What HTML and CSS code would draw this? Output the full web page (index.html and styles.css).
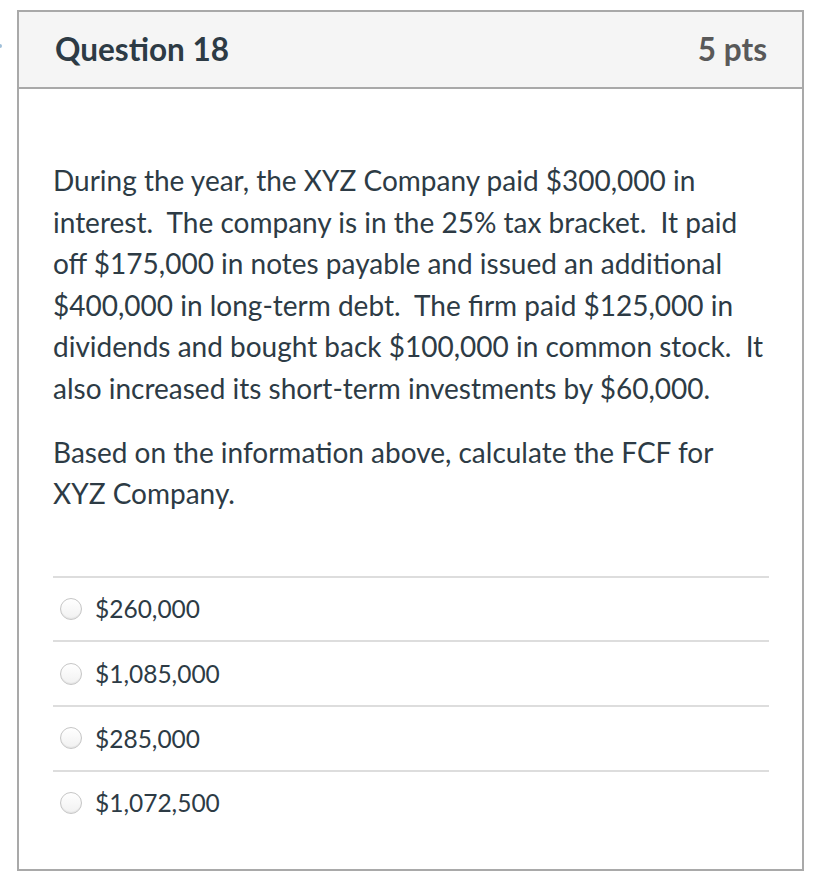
FILE: index.html
```html
<!DOCTYPE html>
<html>
<head>
<meta charset="utf-8">
<link rel="stylesheet" href="styles.css">
</head>
<body>
<span class="edge-dot"></span>
<div class="question">
  <div class="q-header">
    <h2 class="q-title">Question 18</h2>
    <span class="q-points">5 pts</span>
  </div>
  <div class="q-body">
    <div class="q-text">
      <p>During the year, the XYZ Company paid $300,000 in interest.&nbsp; The company is in the 25% tax bracket.&nbsp; It paid off $175,000 in notes payable and issued an additional $400,000 in long-term debt.&nbsp; The firm paid $125,000 in dividends and bought back $100,000 in common stock.&nbsp; It also increased its short-term investments by $60,000.</p>
      <p>Based on the information above, calculate the FCF for XYZ Company.</p>
    </div>
    <div class="answers">
      <label class="answer"><span class="radio"></span><span class="answer-text">$260,000</span></label>
      <label class="answer"><span class="radio"></span><span class="answer-text">$1,085,000</span></label>
      <label class="answer"><span class="radio"></span><span class="answer-text">$285,000</span></label>
      <label class="answer"><span class="radio"></span><span class="answer-text">$1,072,500</span></label>
    </div>
  </div>
</div>
</body>
</html>
```
FILE: styles.css
```css
html, body {
  margin: 0;
  padding: 0;
  background: #ffffff;
}

body {
  font-family: Lato, "Liberation Sans", sans-serif;
  color: #2d3b45;
  padding: 10px 0 0 17px;
  position: relative;
}

.edge-dot {
  position: absolute;
  left: -2px;
  top: 44px;
  width: 4px;
  height: 4px;
  border-radius: 50%;
  background: #9fbfd8;
}

.question {
  width: 787px;
  box-sizing: border-box;
  border: 2px solid #a9a9a9;
}

.q-header {
  display: flex;
  justify-content: space-between;
  align-items: center;
  background: #f5f5f5;
  border-bottom: 2px solid #a9a9a9;
  height: 75px;
  padding: 0 35px 0 36px;
  box-sizing: content-box;
}

.q-title {
  margin: 0;
  font-size: 31.5px;
  font-weight: 700;
  color: #2d3b45;
  line-height: 1.2;
}

.q-points {
  font-size: 31.5px;
  font-weight: 700;
  color: #595959;
  line-height: 1.2;
}

.q-body {
  padding: 71px 33px 35px 34px;
}

.q-text {
  font-size: 28px;
  line-height: 41.6px;
}

.q-text p {
  margin: 0 0 22px 0;
}

.q-text p:last-child {
  margin-bottom: 0;
}

.answers {
  margin-top: 61px;
}

.answer {
  display: flex;
  align-items: center;
  height: 62.67px;
  border-top: 2px solid #dddddd;
  padding-left: 7px;
  box-sizing: content-box;
}

.radio {
  width: 20px;
  height: 20px;
  border-radius: 50%;
  border: 1px solid #c6c6c6;
  background: linear-gradient(#ffffff, #f1f1f1);
  box-shadow: inset 0 -1px 1px rgba(0, 0, 0, 0.06);
  flex: none;
}

.answer-text {
  margin-left: 13px;
  font-size: 24.5px;
  color: #2d3b45;
  line-height: 1.2;
}
```
